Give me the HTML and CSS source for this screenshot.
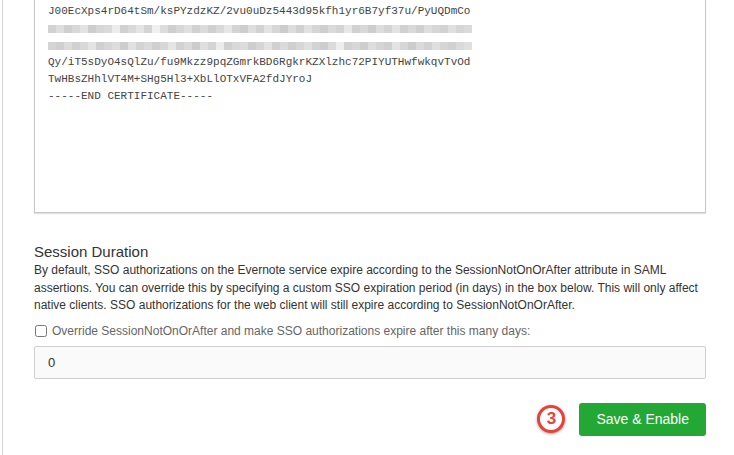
FILE: index.html
```html
<!DOCTYPE html>
<html>
<head>
<meta charset="utf-8">
<link rel="stylesheet" href="styles.css">
</head>
<body>
<div class="panel">
  <div class="cert">
    <div class="cert-line">J00EcXps4rD64tSm/ksPYzdzKZ/2vu0uDz5443d95kfh1yr6B7yf37u/PyUQDmCo</div>
    <div class="cert-line"><span class="blur blur-a"></span></div>
    <div class="cert-line"><span class="blur blur-b"></span></div>
    <div class="cert-line">Qy/iT5sDyO4sQlZu/fu9Mkzz9pqZGmrkBD6RgkrKZXlzhc72PIYUTHwfwkqvTvOd</div>
    <div class="cert-line">TwHBsZHhlVT4M+SHg5Hl3+XbLlOTxVFA2fdJYroJ</div>
    <div class="cert-line">-----END CERTIFICATE-----</div>
  </div>

  <h3 class="section-title">Session Duration</h3>
  <p class="section-desc">By default, SSO authorizations on the Evernote service expire according to the SessionNotOnOrAfter attribute in SAML assertions. You can override this by specifying a custom SSO expiration period (in days) in the box below. This will only affect native clients. SSO authorizations for the web client will still expire according to SessionNotOnOrAfter.</p>

  <label class="check-row">
    <input type="checkbox" class="check">
    <span>Override SessionNotOnOrAfter and make SSO authorizations expire after this many days:</span>
  </label>

  <div class="days-input">0</div>

  <div class="actions">
    <span class="step-badge">3</span>
    <button class="btn-save">Save &amp; Enable</button>
  </div>
</div>
</body>
</html>
```

FILE: styles.css
```css
html, body {
  margin: 0;
  padding: 0;
  background: #fff;
  height: 455px;
  overflow: hidden;
}

body {
  font-family: "Liberation Sans", Arial, sans-serif;
  color: #333;
}

.panel {
  margin-left: 2px;
  border-left: 1px solid #d4d4d4;
  padding: 0 28px 0 31px;
  height: 455px;
  box-sizing: border-box;
}

.cert {
  box-sizing: border-box;
  border: 1px solid #c8c8c8;
  border-top: none;
  box-shadow: 0 1px 1px rgba(0,0,0,0.12);
  padding: 3px 13px 0 13px;
  height: 213px;
  font-family: "Liberation Mono", "Courier New", monospace;
  font-size: 11px;
  color: #444;
}

.cert-line {
  height: 17px;
  line-height: 17px;
  white-space: pre;
  display: flex;
  align-items: center;
}

.blur {
  display: block;
  width: 424px;
  height: 8px;
}

.blur-a {
  background: linear-gradient(90deg,
    #d2d2d2 0 8px, #dedede 8px 16px, #cfcfcf 16px 24px, #d8d8d8 24px 32px,
    #e2e2e2 32px 40px, #cdcdcd 40px 48px, #d6d6d6 48px 56px, #dadada 56px 64px,
    #ececec 64px 72px, #d0d0d0 72px 80px, #d9d9d9 80px 88px, #e4e4e4 88px 96px,
    #d3d3d3 96px 104px, #f0f0f0 104px 112px, #dcdcdc 112px 120px, #cecece 120px 128px,
    #d7d7d7 128px 136px, #e0e0e0 136px 144px, #d1d1d1 144px 152px, #dbdbdb 152px 160px,
    #cfcfcf 160px 168px, #d9d9d9 168px 176px, #e6e6e6 176px 184px, #d4d4d4 184px 192px,
    #cdcdcd 192px 200px, #dedede 200px 208px, #d2d2d2 208px 216px, #e3e3e3 216px 224px,
    #d6d6d6 224px 232px, #cccccc 232px 240px, #dcdcdc 240px 248px, #d0d0d0 248px 256px,
    #e1e1e1 256px 264px, #d5d5d5 264px 272px, #cecece 272px 280px, #dadada 280px 288px,
    #d3d3d3 288px 296px, #e7e7e7 296px 304px, #d1d1d1 304px 312px, #d8d8d8 312px 320px,
    #cdcdcd 320px 328px, #dddddd 328px 336px, #d4d4d4 336px 344px, #e2e2e2 344px 352px,
    #d0d0d0 352px 360px, #d9d9d9 360px 368px, #cfcfcf 368px 376px, #dedede 376px 384px,
    #d6d6d6 384px 392px, #d2d2d2 392px 400px, #e0e0e0 400px 408px, #d5d5d5 408px 416px,
    #dadada 416px 424px);
}

.blur-b {
  background: linear-gradient(90deg,
    #d4d4d4 0 8px, #cfcfcf 8px 16px, #dcdcdc 16px 24px, #d1d1d1 24px 32px,
    #d8d8d8 32px 40px, #e4e4e4 40px 48px, #d0d0d0 48px 56px, #d6d6d6 56px 64px,
    #dddddd 64px 72px, #cdcdcd 72px 80px, #e1e1e1 80px 88px, #d3d3d3 88px 96px,
    #dadada 96px 104px, #cfcfcf 104px 112px, #d7d7d7 112px 120px, #e5e5e5 120px 128px,
    #d2d2d2 128px 136px, #d9d9d9 136px 144px, #cccccc 144px 152px, #dfdfdf 152px 160px,
    #d4d4d4 160px 168px, #ececec 168px 176px, #d0d0d0 176px 184px, #d8d8d8 184px 192px,
    #dcdcdc 192px 200px, #cecece 200px 208px, #d5d5d5 208px 216px, #e2e2e2 216px 224px,
    #d1d1d1 224px 232px, #dadada 232px 240px, #cfcfcf 240px 248px, #d6d6d6 248px 256px,
    #e0e0e0 256px 264px, #d3d3d3 264px 272px, #cdcdcd 272px 280px, #dbdbdb 280px 288px,
    #eeeeee 288px 296px, #d2d2d2 296px 304px, #d7d7d7 304px 312px, #cecece 312px 320px,
    #dddddd 320px 328px, #d4d4d4 328px 336px, #d0d0d0 336px 344px, #e3e3e3 344px 352px,
    #d6d6d6 352px 360px, #cccccc 360px 368px, #d9d9d9 368px 376px, #d2d2d2 376px 384px,
    #dedede 384px 392px, #d5d5d5 392px 400px, #d1d1d1 400px 408px, #dadada 408px 416px,
    #e0e0e0 416px 424px);
}

.section-title {
  margin: 29px 0 0 0;
  font-size: 15px;
  font-weight: normal;
  line-height: 20px;
  color: #333;
}

.section-desc {
  margin: 0;
  font-size: 12px;
  line-height: 17.5px;
  color: #333;
}

.check-row {
  display: flex;
  align-items: center;
  margin-top: 7px;
  height: 18px;
  font-size: 12px;
  color: #666;
}

.check {
  margin: 0 5px 0 1px;
  width: 12px;
  height: 12px;
}

.days-input {
  margin-top: 6px;
  height: 31px;
  line-height: 31px;
  border: 1px solid #cfcfcf;
  border-radius: 2px;
  background: #fafafa;
  padding: 0 13px;
  font-size: 13px;
  color: #333;
}

.actions {
  margin-top: 24px;
  display: flex;
  justify-content: flex-end;
  align-items: center;
  gap: 14px;
}

.step-badge {
  width: 22px;
  height: 22px;
  border: 3px solid #ea4137;
  border-radius: 50%;
  background: #fff;
  color: #ea4137;
  font-weight: bold;
  font-size: 17px;
  display: flex;
  align-items: center;
  justify-content: center;
  box-shadow: 0 1px 3px rgba(0,0,0,0.35);
}

.btn-save {
  height: 33px;
  padding: 0 17px;
  border: none;
  border-radius: 3px;
  background: #23a835;
  color: #fff;
  font-family: "Liberation Sans", Arial, sans-serif;
  font-size: 14px;
}
```
